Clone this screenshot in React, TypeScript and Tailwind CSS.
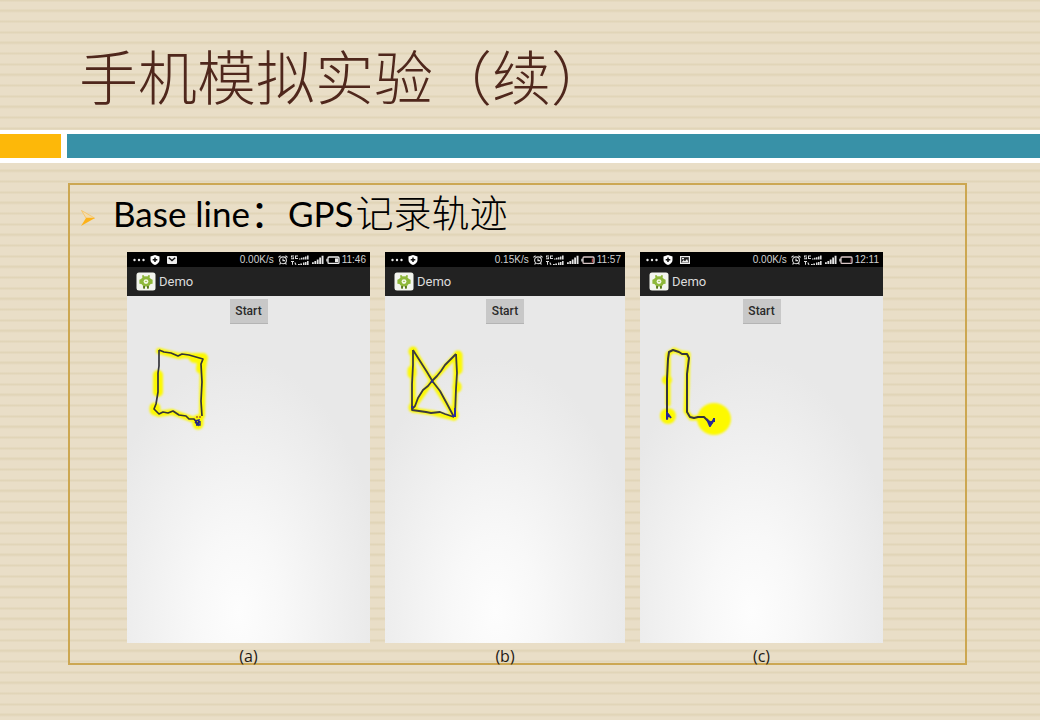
import type { ReactNode } from "react";

type Phone = {
  id: string;
  speed: string;
  time: string;
  notices: ("mail" | "picture")[];
  charge: "high" | "low" | "empty";
  viewBox: string;
  drawing: ReactNode;
};

const phones: Phone[] = [
  {
    id: "(a)",
    speed: "0.00K/s",
    time: "11:46",
    notices: ["mail"],
    charge: "high",
    viewBox: "0 0 243 120",
    drawing: (
      <>
        <g fill="none" stroke="#fdf904" strokeLinecap="round" strokeLinejoin="round" filter="url(#glow)">
          <path strokeWidth="6" d="M32 27 52 32 59 31 76 35 75 92M27 85 31 90 45 88 59 93 70 97" />
          <path strokeWidth="10" d="M31 51V68M67 34 76 34M75 37 74 45" />
          <path strokeWidth="11" d="M28 84V86M71 96V100" />
        </g>
        <path fill="none" stroke="#34343a" strokeWidth="1.7" strokeLinejoin="round" d="M32 26 37 28 44 29 51 32 55 30 62 31 69 33 76 35 74 40 75 58 74 77 75 92M32 26 32 42 31 49 31 68 29 80 27 85 32 90 36 88 41 89 46 87 52 91 59 92 62 95 67 95 71 100" />
        <path fill="none" stroke="#23238c" strokeWidth="1.4" d="M68 97 72 96 71 101 68 98M69 101 73 101 73 97" />
        <path fill="none" stroke="#b06030" strokeWidth="1.3" strokeDasharray="2 1" d="M69 93 75 93" />
      </>
    ),
  },
  {
    id: "(b)",
    speed: "0.15K/s",
    time: "11:57",
    notices: [],
    charge: "low",
    viewBox: "0 0 240 120",
    drawing: (
      <>
        <g fill="none" stroke="#fdf904" strokeLinecap="round" strokeLinejoin="round" filter="url(#glow)">
          <path strokeWidth="5" d="M28 27 28 86 48 89 69 94 72 30 47 57 28 84M29 27 47 57 69 92" />
          <path strokeWidth="9" d="M28 27V28M73 31 73 46M27 46V50M72 62V64M69 90V92M28 83V84" />
        </g>
        <g fill="none" stroke="#3a3a40" strokeWidth="1.8" strokeLinejoin="round">
          <path d="M28 26 28 41 27 60 27 86 34 87 41 88 46 89 55 88 60 90 69 93" />
          <path d="M71 30 68 33 64 37 60 41 56 47 52 52 47 57 43 62 38 66 33 74 30 82 27 85" />
          <path d="M28 26 35 37 42 48 48 58 55 67 61 78 69 93M71 30 72 49 71 65 70 91" />
        </g>
        <path fill="none" stroke="#2b2b9c" strokeWidth="2" d="M27 82V84M46 57 48 58M67 92 70 92V84" />
      </>
    ),
  },
  {
    id: "(c)",
    speed: "0.00K/s",
    time: "12:11",
    notices: ["picture"],
    charge: "empty",
    viewBox: "0 0 243 120",
    drawing: (
      <>
        <g fill="#fdf904" filter="url(#glow)">
          <ellipse cx="74" cy="95" rx="17" ry="16" />
          <circle cx="28" cy="92" r="8" />
          <circle cx="27" cy="56" r="5" />
          <path fill="none" stroke="#fdf904" strokeWidth="5" strokeLinecap="round" strokeLinejoin="round" d="M28 80 28 30 34 26 41 29 48 30 47 63 46 87 51 94 60 94" />
        </g>
        <path fill="none" stroke="#35353a" strokeWidth="2" strokeLinejoin="round" d="M27 95 27 55 28 35 29 28 33 26 39 28 42 30 47 30 49 34 47 50 47 88 50 93 54 94 58 93 64 93 68 97" />
        <path fill="none" stroke="#272795" strokeWidth="2" strokeLinejoin="round" d="M27 88V95L28 90 31 94M67 95 70 102 74 95 72 99 68 97M74 94V98" />
      </>
    ),
  },
];

function Dots() {
  return (
    <svg className="h-2.5 w-3 shrink-0" viewBox="0 0 12 10" fill="#e8e8e8" aria-hidden="true">
      <circle cx="1.5" cy="5" r="1.2" />
      <circle cx="6" cy="5" r="1.2" />
      <circle cx="10.5" cy="5" r="1.2" />
    </svg>
  );
}

function Shield() {
  return (
    <svg className="h-2.5 w-2.5 shrink-0" viewBox="0 0 10 10" aria-hidden="true">
      <path fill="#fff" d="M5 0 9.5 1.6V5C9.5 7.5 7.5 9 5 10 2.5 9 .5 7.5.5 5V1.6Z" />
      <path stroke="#111" strokeWidth="1.5" d="M5 2.4V7M2.7 4.7H7.3" />
    </svg>
  );
}

function Notice({ kind }: { kind: "mail" | "picture" }) {
  return (
    <svg className="ml-0.5 h-2.5 w-2.5 shrink-0" viewBox="0 0 10 10" aria-hidden="true">
      {kind === "mail" ? (
        <>
          <rect y="1" width="10" height="8" rx="1" fill="#eee" />
          <path fill="none" stroke="#111" strokeWidth="1.4" d="M1.8 2.8 5 5.6 8.2 2.8" />
        </>
      ) : (
        <>
          <rect x=".6" y="1.6" width="8.8" height="6.8" fill="#222" stroke="#eee" strokeWidth="1.2" />
          <path fill="#eee" d="M1.5 7.5 3.5 5 5 6.2 7 4 8.6 7.5ZM2 3h2v1.3H2Z" />
        </>
      )}
    </svg>
  );
}

function Alarm() {
  return (
    <svg className="h-2.5 w-2.5 shrink-0" viewBox="0 0 10 10" fill="none" stroke="#ddd" aria-hidden="true">
      <circle cx="5" cy="5.3" r="3.4" strokeWidth="1.1" />
      <path strokeWidth="1.2" d="M.4 2.4 2.6.7M9.6 2.4 7.4.7M2.6 8 1.6 9.5M7.4 8 8.4 9.5M5 3.5V5.6H7" />
    </svg>
  );
}

function Network() {
  return (
    <svg className="h-2.5 w-5 shrink-0" viewBox="0 0 20 10" fill="#ddd" aria-hidden="true">
      <path d="M1 .5h3v1H2v.7h2v2H1v-1h2v-.6H1ZM5 .5h3v1H6v1.6h2v1H5ZM9 3.4h1.5v1H9ZM11 2.8h1.5v1.6H11ZM13 2.2h1.5v2.2H13ZM15 1.4h1.5v3H15ZM17 .5h1.6v3.9H17Z" />
      <path d="M1 6h3v1H3v2.8H2V7H1ZM4.5 7.4 5.5 7.4 6.5 9.8 5 9.8ZM8 9h1.8v.9H8ZM10.3 8.6H12v1.3h-1.7ZM13 7.6h1.5v2.3H13ZM15 6.9h1.5v3H15ZM17 6h1.6v3.9H17Z" />
    </svg>
  );
}

function Signal() {
  return (
    <svg className="h-2.5 w-3 shrink-0" viewBox="0 0 12 10" fill="#e4e4e4" aria-hidden="true">
      <path d="M0 7.2h1.8V9H0ZM2.4 6h1.8v3H2.4ZM4.8 4.4h1.8V9H4.8ZM7.2 2.6H9V9H7.2ZM9.6.8h1.9V9H9.6Z" />
    </svg>
  );
}

function Battery({ charge }: { charge: Phone["charge"] }) {
  return (
    <svg className="h-2.5 w-3.5 shrink-0" viewBox="0 0 14 10" aria-hidden="true">
      <rect x="2" y="2" width="11" height="6.4" rx="1" fill="none" stroke={charge === "high" ? "#eee" : "#d8c6c6"} strokeWidth="1.3" />
      <path fill="#ddd" d="M.3 3.8h1.4v2.8H.3Z" />
      {charge === "high" && <path fill="#eee" d="M9 3.4h3v3.8H9Z" />}
      {charge === "low" && <path fill="#b44" d="M10.8 3.4H12v3.8h-1.2Z" />}
      {charge === "empty" && <path fill="#834" d="M11.4 3.4h.8v3.8h-.8Z" />}
    </svg>
  );
}

function DemoIcon() {
  return (
    <svg className="h-5 w-5 shrink-0" viewBox="0 0 20 20" aria-hidden="true">
      <rect x=".5" y=".5" width="19" height="18" rx="2.5" fill="#f3f5ee" />
      <path fill="#8eb83a" d="M6 3.5 7.4 3 8.6 4.5Q10 4.1 11.4 4.5L12.6 3 14 3.5 13.5 5.6 15 7 16.6 7.8V11.8L14.6 12 13.5 13.5 12.8 14V16.5H11V14.4H9V16.5H7.2V14L5.4 12 3.4 11.8V7.8L5 7 6.5 5.6Z" />
      <circle cx="10" cy="9.6" r="2.4" fill="#f4f8e6" />
      <path fill="#a9c966" d="M8.8 10a1.2 1.2 0 0 1 2.4 0Z" />
      <path fill="#59771e" d="M7.2 14h1.8v2.5H7.2ZM11 14h1.8v2.5H11Z" />
    </svg>
  );
}

function PhoneFigure({ phone }: { phone: Phone }) {
  return (
    <figure className="flex min-w-0 flex-col">
      <div className="bg-[#e8e8e8] bg-[radial-gradient(ellipse_60%_65%_at_46%_92%,#fdfdfd_0%,#f8f8f8_30%,#e8e8e8_100%)]">
        <div className="flex h-[15px] items-center bg-black pr-1 pl-1.5 font-['Liberation_Sans',sans-serif] text-[10px] leading-[15px] text-[#d0d0d0]">
          <div className="flex items-center gap-[5px]">
            <Dots />
            <Shield />
            {phone.notices.map((kind) => (
              <Notice key={kind} kind={kind} />
            ))}
          </div>
          <div className="ml-auto flex items-center gap-0.5">
            <span className="mr-0.5">{phone.speed}</span>
            <Alarm />
            <Network />
            <Signal />
            <Battery charge={phone.charge} />
            <span>{phone.time}</span>
          </div>
        </div>
        <div className="flex h-[29px] items-center gap-[3px] bg-[#222222] pl-[9px] font-[Roboto,sans-serif] text-[13px] text-[#dcdcdc]">
          <DemoIcon />
          <span>Demo</span>
        </div>
        <div className="flex h-[347px] flex-col items-center pt-[3px]">
          <button
            type="button"
            className="h-[25px] w-[38px] border-b border-[#b4b4b4] bg-[#c8c8c8] text-center font-[Roboto,sans-serif] text-[12px] font-medium text-[#2a2a2a]"
          >
            Start
          </button>
          <svg className="w-full" viewBox={phone.viewBox} role="img" aria-label="GPS">
            {phone.drawing}
          </svg>
        </div>
      </div>
      <figcaption className="pt-[5px] pb-px text-center font-['Open_Sans',sans-serif] text-[16px] leading-4 font-medium text-[#1f1a14]">
        {phone.id}
      </figcaption>
    </figure>
  );
}

export default function App() {
  return (
    <main className="min-h-screen bg-[#e9dec7] bg-[linear-gradient(to_bottom,#e1d5b8_0px,#e1d5b8_1px,#e9dec7_2px,#e9dec7_9px,#e1d5b8_10px,#e1d5b8_11px,#e9dec7_13px,#e9dec7_20px,#e1d5b8_21px,#e1d5b8_22px,#e9dec7_23px,#e9dec7_31px,#e1d5b8_32px)] bg-[length:100%_32px]">
      <svg className="absolute h-0 w-0" aria-hidden="true">
        <filter id="glow" x="-20%" y="-20%" width="140%" height="140%">
          <feGaussianBlur stdDeviation="0.8" />
        </filter>
      </svg>

      <header className="flex h-[130px] items-center pt-5 pl-[79px]">
        <h1 className="font-['Noto_Sans_CJK_SC',sans-serif] text-[59px] leading-[80px] font-light text-[#4f271c]">
          手机模拟实验（续）
        </h1>
      </header>

      <div className="flex gap-1.5 bg-white pt-1 pb-[5px]">
        <div className="h-6 w-[61px] bg-[#fdb809]" />
        <div className="h-6 flex-1 bg-[#3891a7]" />
      </div>

      <section className="mt-5 mr-[73px] ml-[68px] border-2 border-[#cca752]">
        <div className="mb-[13px] flex h-[54px] items-center gap-[18px] pl-[11px]">
          <svg className="mt-3 h-4 w-3.5 shrink-0" viewBox="0 0 14 16" aria-hidden="true">
            <path fill="#f3dcae" stroke="#f8bf52" strokeWidth="0.7" strokeLinejoin="round" d="M.5.5 13.5 8H5Z" />
            <path fill="#fdb219" d="M5 8H14L0 16Z" />
          </svg>
          <h2 className="font-[Lato,'Noto_Sans_CJK_SC',sans-serif] text-[35px] leading-[54px] whitespace-nowrap text-black">
            Base line<span className="text-[38px]">：</span>GPS
            <span className="ml-0.5 font-['Noto_Sans_CJK_SC',sans-serif] text-[38px] font-light">记录轨迹</span>
          </h2>
        </div>
        <div className="-mb-0.5 grid grid-cols-[243fr_240fr_243fr] gap-x-[15px] pr-[82px] pl-[57px]">
          {phones.map((phone) => (
            <PhoneFigure key={phone.id} phone={phone} />
          ))}
        </div>
      </section>
    </main>
  );
}
